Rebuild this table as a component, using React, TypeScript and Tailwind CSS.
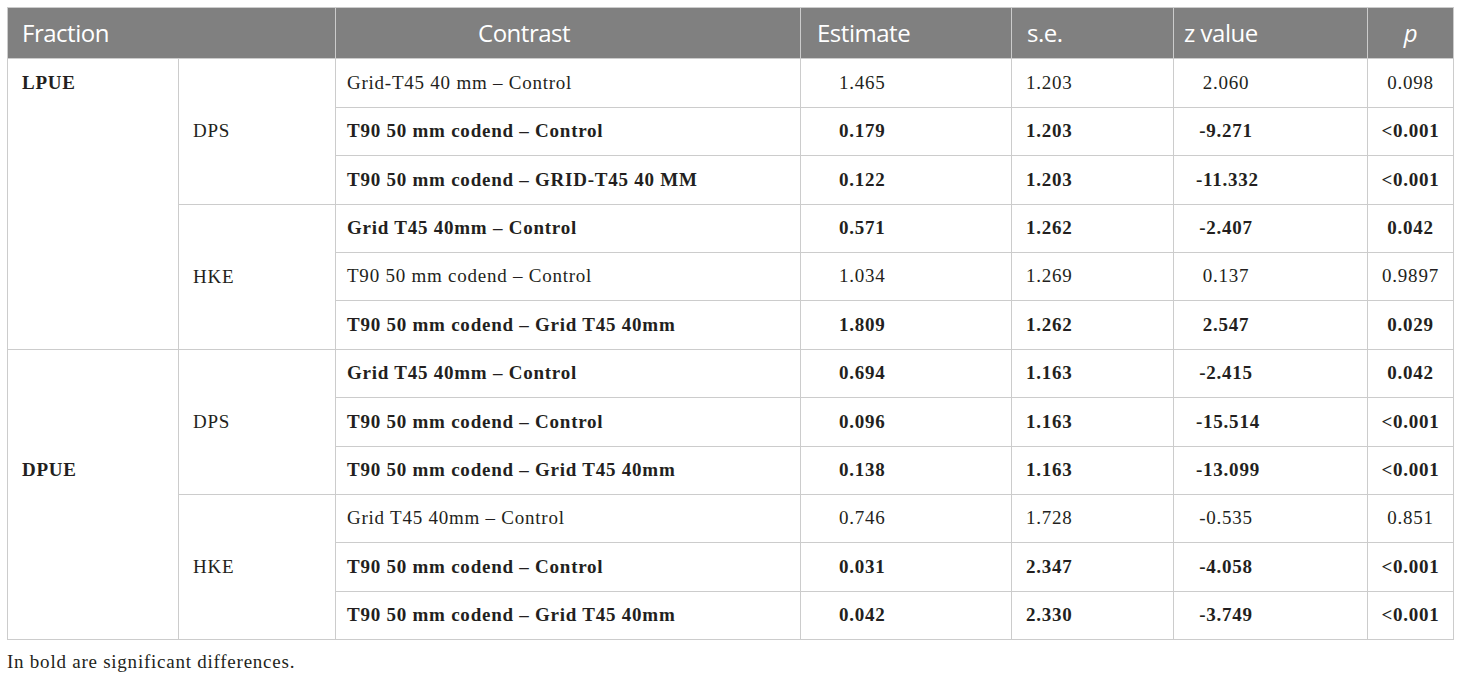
type Row = {
  contrast: string;
  est: string;
  se: string;
  z: string;
  p: string;
  bold: boolean;
};

const rows: Row[] = [
  { contrast: "Grid-T45 40 mm – Control", est: "1.465", se: "1.203", z: "2.060", p: "0.098", bold: false },
  { contrast: "T90 50 mm codend – Control", est: "0.179", se: "1.203", z: "-9.271", p: "<0.001", bold: true },
  { contrast: "T90 50 mm codend – GRID-T45 40 MM", est: "0.122", se: "1.203", z: "-11.332", p: "<0.001", bold: true },
  { contrast: "Grid T45 40mm – Control", est: "0.571", se: "1.262", z: "-2.407", p: "0.042", bold: true },
  { contrast: "T90 50 mm codend – Control", est: "1.034", se: "1.269", z: "0.137", p: "0.9897", bold: false },
  { contrast: "T90 50 mm codend – Grid T45 40mm", est: "1.809", se: "1.262", z: "2.547", p: "0.029", bold: true },
  { contrast: "Grid T45 40mm – Control", est: "0.694", se: "1.163", z: "-2.415", p: "0.042", bold: true },
  { contrast: "T90 50 mm codend – Control", est: "0.096", se: "1.163", z: "-15.514", p: "<0.001", bold: true },
  { contrast: "T90 50 mm codend – Grid T45 40mm", est: "0.138", se: "1.163", z: "-13.099", p: "<0.001", bold: true },
  { contrast: "Grid T45 40mm – Control", est: "0.746", se: "1.728", z: "-0.535", p: "0.851", bold: false },
  { contrast: "T90 50 mm codend – Control", est: "0.031", se: "2.347", z: "-4.058", p: "<0.001", bold: true },
  { contrast: "T90 50 mm codend – Grid T45 40mm", est: "0.042", se: "2.330", z: "-3.749", p: "<0.001", bold: true },
];

const serif = "font-['Liberation_Serif','Times_New_Roman',serif] text-[19px] tracking-[0.04em] text-[#231f20]";
const head = "bg-[#808080] text-white font-['Open_Sans',sans-serif] text-[24px] tracking-[-0.02em] flex items-center";

export default function App() {
  return (
    <div className="bg-white w-[1460px] h-[676px] pt-[7px] pl-[7px]">
      <div
        className={`grid w-[1447px] gap-px bg-[#cccccc] border border-[#cccccc] grid-cols-[170px_156px_464px_210px_161px_193px_85px] grid-rows-[50px_48px_47px_48px_47px_47px_48px_47px_48px_47px_47px_48px_47px] ${serif}`}
      >
        <div className={`${head} col-span-2 pl-[14px]`}>Fraction</div>
        <div className={`${head} pl-[142px]`}>Contrast</div>
        <div className={`${head} pl-[16px]`}>Estimate</div>
        <div className={`${head} pl-[15px]`}>s.e.</div>
        <div className={`${head} pl-[10px]`}>z value</div>
        <div className={`${head} justify-center italic`}>p</div>

        <div className="bg-white col-start-1 row-start-2 row-span-6 pl-[14px]">
          <div className="h-[48px] flex items-center font-bold">LPUE</div>
        </div>
        <div className="bg-white col-start-1 row-start-8 row-span-6 pl-[14px]">
          <div className="h-[48px] mt-[96px] flex items-center font-bold">DPUE</div>
        </div>

        <div className="bg-white col-start-2 row-start-2 row-span-3 pl-[14px] flex items-center">DPS</div>
        <div className="bg-white col-start-2 row-start-5 row-span-3 pl-[14px] flex items-center">HKE</div>
        <div className="bg-white col-start-2 row-start-8 row-span-3 pl-[14px] flex items-center">DPS</div>
        <div className="bg-white col-start-2 row-start-11 row-span-3 pl-[14px] flex items-center">HKE</div>

        {rows.map((r, i) => {
          const w = r.bold ? "font-bold" : "font-normal";
          return (
            <div key={i} className={`contents ${w}`}>
              <div className="bg-white col-start-3 pl-[11px] flex items-center">{r.contrast}</div>
              <div className="bg-white col-start-4 pl-[38px] flex items-center">{r.est}</div>
              <div className="bg-white col-start-5 pl-[14px] flex items-center">{r.se}</div>
              <div className="bg-white col-start-6 pl-[22px] flex items-center">
                <span className="w-[60px] text-center">{r.z}</span>
              </div>
              <div className="bg-white col-start-7 flex items-center justify-center">{r.p}</div>
            </div>
          );
        })}
      </div>
      <p className={`${serif} mt-[8px]`}>In bold are significant differences.</p>
    </div>
  );
}
